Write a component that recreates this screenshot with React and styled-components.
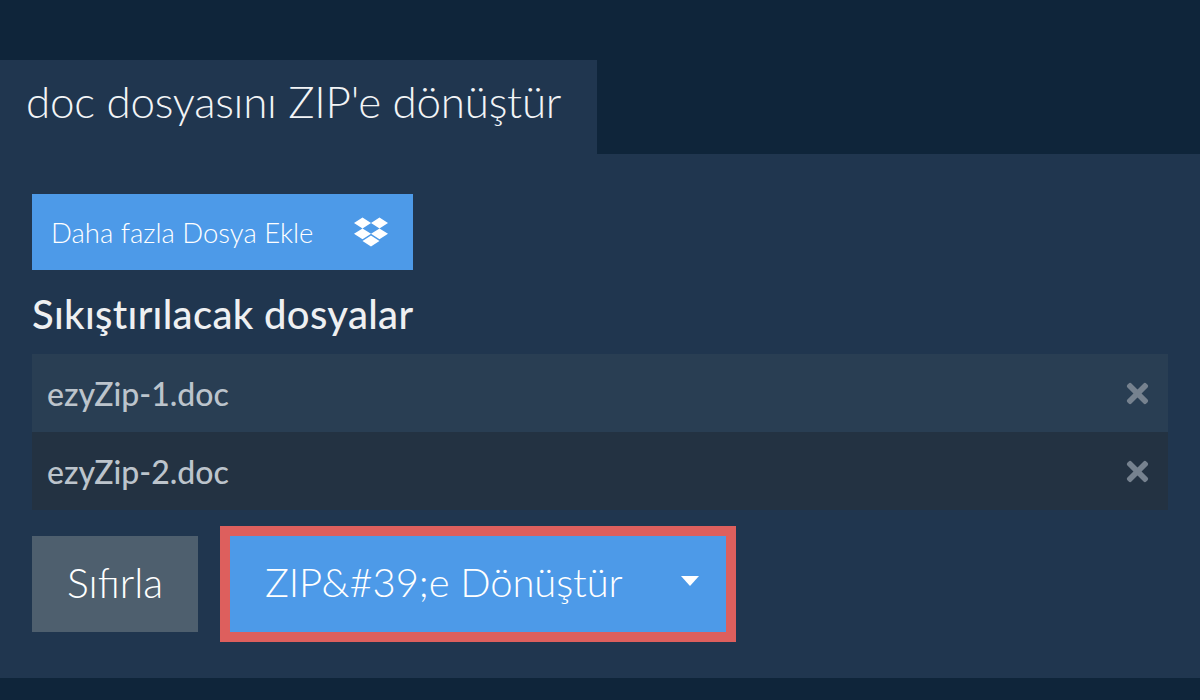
import React from "react"
import styled, { createGlobalStyle } from "styled-components"
import { FaDropbox, FaTimes } from "react-icons/fa"

const GlobalStyle = createGlobalStyle`
  html, body {
    margin: 0;
    height: 100%;
    overflow: hidden;
    background: #0f253a;
    font-family: Lato, "Liberation Sans", sans-serif;
  }
`

const Page = styled.div`
  width: 1200px;
  height: 700px;
  padding-top: 60px;
  box-sizing: border-box;
  background: #0f253a;
`

const Tab = styled.h1`
  width: 597px;
  height: 94px;
  margin: 0;
  padding: 0 0 12px 26px;
  box-sizing: border-box;
  display: flex;
  align-items: center;
  background: #20364f;
  color: #f2f4f6;
  font-size: 44px;
  font-weight: 300;
  letter-spacing: -0.27px;
  white-space: nowrap;
`

const Panel = styled.div`
  height: 524px;
  padding: 40px 32px 0;
  box-sizing: border-box;
  background: #20364f;
`

const AddButton = styled.button`
  width: 381px;
  height: 76px;
  padding: 0 25px 0 19px;
  border: 0;
  display: flex;
  align-items: center;
  justify-content: space-between;
  background: #4d9ae8;
  color: #fff;
  font-family: inherit;
  font-size: 27.5px;
  font-weight: 300;
  svg {
    font-size: 34px;
  }
`

const Heading = styled.h2`
  margin: 21px 0 17px;
  color: #eef0f2;
  font-size: 40px;
  line-height: 46px;
  font-weight: 500;
  letter-spacing: 0.33px;
  white-space: nowrap;
`

const FileRow = styled.div`
  height: 78px;
  padding: 0 15px 0 15px;
  display: flex;
  align-items: center;
  justify-content: space-between;
  background: ${({ $odd }) => ($odd ? "#293e53" : "#233242")};
  color: #bcc4cc;
  font-size: 32px;
  font-weight: 500;
  svg {
    color: #76828f;
    font-size: 31px;
  }
`

const Actions = styled.div`
  margin-top: 26px;
  display: flex;
  align-items: center;
  gap: 32px;
`

const ResetButton = styled.button`
  width: 166px;
  height: 96px;
  padding: 0 0 4px;
  border: 0;
  background: #4e5f6e;
  color: #fff;
  font-family: inherit;
  font-size: 41px;
  font-weight: 300;
`

const ConvertButton = styled.button`
  width: 496px;
  height: 96px;
  padding: 0 27px 4px 35px;
  border: 0;
  display: flex;
  align-items: center;
  justify-content: space-between;
  background: #4d9ae8;
  outline: 10px solid #dd5f5d;
  color: #fff;
  font-family: inherit;
  font-size: 40px;
  font-weight: 300;
  letter-spacing: -0.1px;
  white-space: nowrap;
`

const Caret = styled.span`
  width: 0;
  height: 0;
  margin-top: -3px;
  border-left: 9px solid transparent;
  border-right: 9px solid transparent;
  border-top: 10px solid #fff;
`

const files = ["ezyZip-1.doc", "ezyZip-2.doc"]

const App = () => {
  return (
    <Page>
      <GlobalStyle />
      <Tab>doc dosyasını ZIP'e dönüştür</Tab>
      <Panel>
        <AddButton>
          Daha fazla Dosya Ekle
          <FaDropbox />
        </AddButton>
        <Heading>Sıkıştırılacak dosyalar</Heading>
        {files.map((name, i) => (
          <FileRow key={name} $odd={i % 2 === 0}>
            {name}
            <FaTimes />
          </FileRow>
        ))}
        <Actions>
          <ResetButton>Sıfırla</ResetButton>
          <ConvertButton>
            ZIP&amp;#39;e Dönüştür
            <Caret />
          </ConvertButton>
        </Actions>
      </Panel>
    </Page>
  )
}

export default App
